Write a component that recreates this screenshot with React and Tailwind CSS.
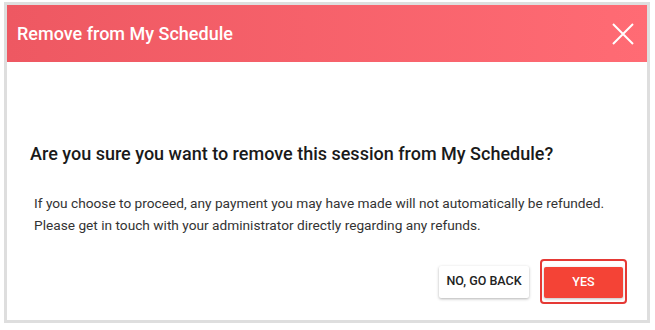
export default function App() {
  return (
    <div className="w-[655px] h-[330px] bg-white" style={{ fontFamily: "Roboto, 'Liberation Sans', sans-serif" }}>
      <div className="ml-[4px] mt-[2px] w-[646px] h-[321px] border-[3px] border-[#dedede] flex flex-col bg-white">
        <div className="h-[57px] shrink-0 flex items-center justify-between pl-[10px] pr-[12px] bg-gradient-to-r from-[#ee5862] to-[#ff6b74]">
          <span className="text-white text-[18px] font-medium">Remove from My Schedule</span>
          <svg width="22" height="22" viewBox="0 0 22 22" className="mr-[1px]">
            <path d="M1 1 L21 21 M21 1 L1 21" stroke="white" strokeWidth="2" strokeLinecap="butt" />
          </svg>
        </div>
        <div className="flex-1 flex flex-col pl-[23px] pr-[20px]">
          <h2 className="mt-[80px] text-[18px] font-medium text-[#1a1a1a] leading-[24px]">
            Are you sure you want to remove this session from My Schedule?
          </h2>
          <p className="mt-[26px] pl-[4px] text-[13.7px] leading-[22px] text-[#333]">
            If you choose to proceed, any payment you may have made will not automatically be refunded.
            <br />
            Please get in touch with your administrator directly regarding any refunds.
          </p>
          <div className="mt-[23px] flex justify-end items-center gap-[11px]">
            <button className="h-[32px] w-[90px] bg-white rounded-[2px] shadow-[0_1px_3px_rgba(0,0,0,0.3)] text-[12.5px] font-medium text-[#222]">
              NO, GO BACK
            </button>
            <div className="pt-[6px] pb-[4px] px-[2px] rounded-[4px] border-2 border-[#e53935]">
              <button className="h-[31px] w-[79px] bg-[#f44336] rounded-[2px] shadow-[0_1px_3px_rgba(0,0,0,0.25)] text-[12.5px] font-medium text-white">
                YES
              </button>
            </div>
          </div>
        </div>
      </div>
    </div>
  );
}
